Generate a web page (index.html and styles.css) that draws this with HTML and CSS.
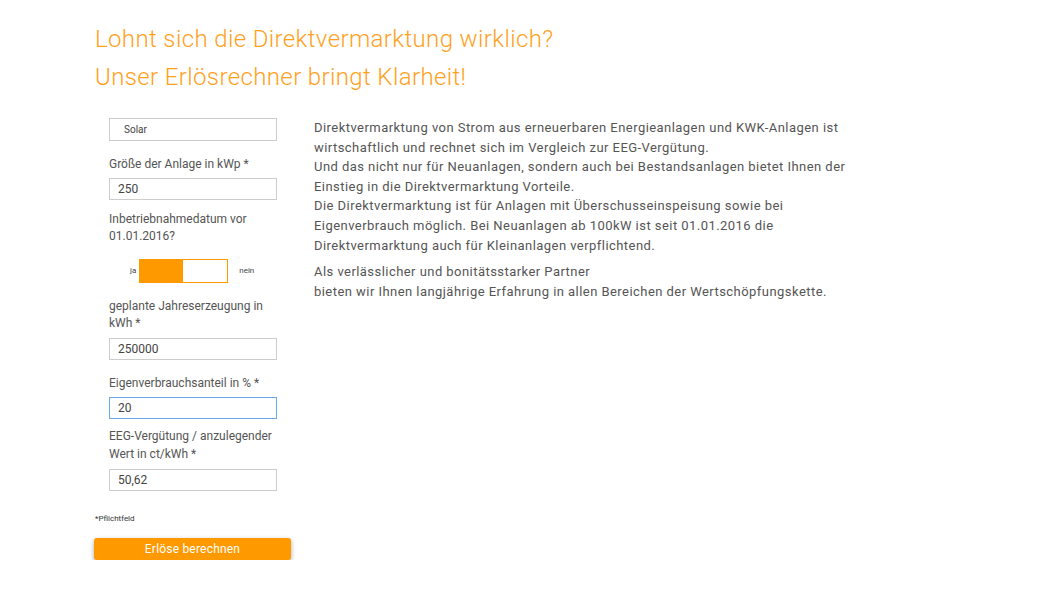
FILE: index.html
```html
<!DOCTYPE html>
<html lang="de">
<head>
<meta charset="utf-8">
<title>Erlösrechner</title>
<link rel="stylesheet" href="styles.css">
</head>
<body>
<div class="page">
  <h1 class="title">Lohnt sich die Direktvermarktung wirklich?<br>Unser Erlösrechner bringt Klarheit!</h1>
  <div class="content">
    <form class="calc">
      <div class="box select"><span>Solar</span></div>

      <label class="lbl l1">Größe der Anlage in kWp *</label>
      <div class="box input">250</div>

      <label class="lbl l2">Inbetriebnahmedatum vor<br>01.01.2016?</label>
      <div class="toggle">
        <span class="tlabel">ja</span>
        <span class="switch"><span class="fill"></span></span>
        <span class="tlabel">nein</span>
      </div>

      <label class="lbl l3">geplante Jahreserzeugung in<br>kWh *</label>
      <div class="box input">250000</div>

      <label class="lbl l4">Eigenverbrauchsanteil in % *</label>
      <div class="box input focus">20</div>

      <label class="lbl l5">EEG-Vergütung / anzulegender<br>Wert in ct/kWh *</label>
      <div class="box input">50,62</div>

      <p class="req">*Pflichtfeld</p>
      <button type="button" class="btn">Erlöse berechnen</button>
    </form>
    <div class="text">
      <p>Direktvermarktung von Strom aus erneuerbaren Energieanlagen und KWK-Anlagen ist<br>wirtschaftlich und rechnet sich im Vergleich zur EEG-Vergütung.<br>Und das nicht nur für Neuanlagen, sondern auch bei Bestandsanlagen bietet Ihnen der<br>Einstieg in die Direktvermarktung Vorteile.<br>Die Direktvermarktung ist für Anlagen mit Überschusseinspeisung sowie bei<br>Eigenverbrauch möglich. Bei Neuanlagen ab 100kW ist seit 01.01.2016 die<br>Direktvermarktung auch für Kleinanlagen verpflichtend.</p>
      <p>Als verlässlicher und bonitätsstarker Partner<br>bieten wir Ihnen langjährige Erfahrung in allen Bereichen der Wertschöpfungskette.</p>
    </div>
  </div>
</div>
</body>
</html>
```

FILE: styles.css
```css
html, body {
  margin: 0;
  padding: 0;
  background: #ffffff;
}
body {
  font-family: Roboto, "Liberation Sans", sans-serif;
  color: #555555;
}
.page {
  padding: 20px 0 0 95px;
}
.title {
  margin: 0;
  font-size: 24px;
  font-weight: 300;
  line-height: 38px;
  letter-spacing: 0.38px;
  color: #ffa11c;
}
.content {
  display: flex;
  gap: 22px;
  margin-top: 22px;
}
.calc {
  width: 197px;
  flex: none;
  display: flex;
  flex-direction: column;
  align-items: flex-start;
}
.box {
  box-sizing: border-box;
  margin-left: 14px;
  width: 168px;
  border: 1px solid #cccccc;
  color: #444444;
  display: flex;
  align-items: center;
}
.select {
  height: 23px;
  font-size: 10px;
  padding-left: 14px;
}
.input {
  height: 22px;
  font-size: 12px;
  padding-left: 8px;
}
.input.focus {
  border-color: #6aaae4;
}
.lbl {
  margin-left: 14px;
  font-size: 12px;
  line-height: 17.5px;
  color: #555555;
  margin-bottom: 4px;
}
.l1 { margin-top: 15px; }
.l2 { margin-top: 11px; margin-bottom: 13px; }
.l3 { margin-top: 15px; margin-bottom: 5px; }
.l4 { margin-top: 15px; margin-bottom: 5px; }
.l5 { margin-top: 9px; margin-bottom: 6px; }
.toggle {
  display: flex;
  align-items: center;
  margin-left: 35px;
}
.tlabel {
  font-size: 8px;
  color: #444444;
}
.switch {
  box-sizing: border-box;
  display: flex;
  width: 89px;
  height: 24px;
  border: 1px solid #ff9900;
  margin: 0 11px 0 3px;
  background: #ffffff;
}
.fill {
  width: 43px;
  background: #ff9900;
}
.req {
  margin: 22px 0 0 0;
  font-size: 8px;
  line-height: 12px;
  color: #333333;
}
.btn {
  margin-top: 13px;
  margin-left: -1px;
  width: 197px;
  height: 22px;
  border: 0;
  border-radius: 3px;
  background: #ff9900;
  color: #ffffff;
  font-family: Roboto, "Liberation Sans", sans-serif;
  font-size: 12px;
  letter-spacing: 0.2px;
  box-shadow: 0 2px 5px rgba(0, 0, 0, 0.35);
  padding: 0;
}
.text {
  font-size: 13px;
  line-height: 19.6px;
  letter-spacing: 0.45px;
  color: #555555;
}
.text p {
  margin: 0 0 7px 0;
}
```
